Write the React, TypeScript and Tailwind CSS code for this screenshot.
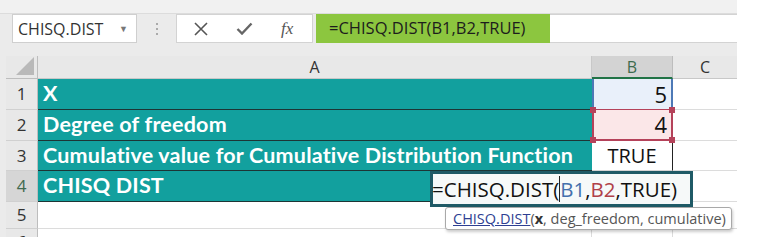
import React from "react";

const teal = "bg-[#12a09e]";

function TealCell({ children, bottomDark = true }: { children?: React.ReactNode; bottomDark?: boolean }) {
  return (
    <div
      className={`${teal} text-white font-bold text-[21.5px] tracking-[0.2px] leading-none pl-[5px] flex items-center whitespace-nowrap border-b ${bottomDark ? "border-[#1d3535]" : "border-[#d4d4d4]"}`}
      style={{ fontFamily: "Lato, 'Open Sans', sans-serif" }}
    >
      {children}
    </div>
  );
}

function RowHead({ n, active = false }: { n: string; active?: boolean }) {
  return (
    <div
      className={`flex items-center justify-center text-[17px] border-b border-[#d0d0d0] border-r border-r-[#bdbdbd] ${active ? "bg-[#d6d6d6] text-[#3f6a4f]" : "bg-[#e8e8e8] text-[#333]"}`}
    >
      {n}
    </div>
  );
}

export default function App() {
  const font = { fontFamily: "'Open Sans', 'Noto Sans', sans-serif" };
  return (
    <div className="w-[764px] h-[246px] bg-white overflow-hidden relative" style={font}>
      <div className="w-[737px] bg-[#ebebeb]">
        {/* toolbar */}
        <div className="h-[14px] bg-[#f1f1f1] border-b border-[#dcdcdc]" />
        <div className="flex h-[29px] items-stretch">
          <div className="ml-[12px] w-[125px] bg-white border border-[#cfcfcf] flex items-center pl-[5px] text-[16px] text-[#333]">
            <span>CHISQ.DIST</span>
            <span className="ml-auto mr-[8px] text-[9px] text-[#777]">▼</span>
          </div>
          <div className="w-[39px] flex flex-col items-center justify-center gap-[3px]">
            <div className="w-[2px] h-[2px] bg-[#aaa]" />
            <div className="w-[2px] h-[2px] bg-[#aaa]" />
            <div className="w-[2px] h-[2px] bg-[#aaa]" />
          </div>
          <div className="w-[137px] bg-white border border-[#d3d3d3] flex items-center">
            <svg width="14" height="14" viewBox="0 0 14 14" className="ml-[17px]">
              <path d="M1 1 L13 13 M13 1 L1 13" stroke="#555" strokeWidth="1.6" fill="none" />
            </svg>
            <svg width="17" height="13" viewBox="0 0 17 13" className="ml-[28px]">
              <path d="M1.5 7 L6 11.5 L15.5 1.5" stroke="#666" strokeWidth="2.4" fill="none" />
            </svg>
            <span className="ml-[28px] italic text-[17px] text-[#555]" style={{ fontFamily: "'Liberation Serif', serif" }}>
              fx
            </span>
          </div>
          <div className="ml-[3px] w-[234px] bg-[#8cc63f] flex items-center pl-[13px] text-[16.5px] text-[#1d1d1d]">
            =CHISQ.DIST(B1,B2,TRUE)
          </div>
          <div className="flex-1 bg-white border-y border-[#d3d3d3]" />
        </div>
        <div className="h-[13px]" />
        {/* grid */}
        <div
          className="ml-[6px] grid bg-white"
          style={{ gridTemplateColumns: "32px 554px 81px 64px", gridTemplateRows: "23px 31px 31px 30px 31px 27px 8px" }}
        >
          {/* header row */}
          <div className="bg-[#e8e8e8] border-r border-b border-[#bdbdbd] relative overflow-hidden">
            <div
              className="absolute right-[3px] bottom-[3px] w-0 h-0"
              style={{ borderLeft: "18px solid transparent", borderBottom: "18px solid #b9b9b9" }}
            />
          </div>
          <div className="bg-[#e8e8e8] border-r border-b border-[#c8c8c8] flex items-center justify-center text-[16px] text-[#333]">
            A
          </div>
          <div className="bg-[#d3d3d3] border-r border-[#bdbdbd] border-b-2 border-b-[#217346] flex items-center justify-center text-[16px] text-[#3d6b4e]">
            B
          </div>
          <div className="bg-[#e8e8e8] border-b border-[#c8c8c8] flex items-center justify-center text-[16px] text-[#333]">
            C
          </div>

          {/* row 1 */}
          <RowHead n="1" />
          <TealCell>X</TealCell>
          <div className="bg-[#e9f0fa] border-x-2 border-[#4d79b6] border-b border-b-[#b5425a] flex items-center justify-end pr-[4px] text-[22px] text-[#111] relative">
            5
          </div>
          <div className="border-b border-[#dcdcdc]" />

          {/* row 2 */}
          <RowHead n="2" />
          <TealCell>Degree of freedom</TealCell>
          <div className="bg-[#fbe7e8] border-x-2 border-[#b5425a] border-b-2 border-b-[#b5425a] flex items-center justify-end pr-[4px] text-[22px] text-[#111] relative">
            4
            <div className="absolute -left-[4px] -top-[3px] w-[6px] h-[6px] bg-[#b5425a]" />
            <div className="absolute -right-[4px] -top-[3px] w-[6px] h-[6px] bg-[#b5425a]" />
            <div className="absolute -left-[4px] -bottom-[4px] w-[6px] h-[6px] bg-[#b5425a]" />
            <div className="absolute -right-[4px] -bottom-[4px] w-[6px] h-[6px] bg-[#b5425a]" />
          </div>
          <div className="border-b border-[#dcdcdc]" />

          {/* row 3 */}
          <RowHead n="3" />
          <TealCell>Cumulative value for Cumulative Distribution Function</TealCell>
          <div className="bg-white border-r border-[#222] border-b border-b-[#d4d4d4] flex items-center justify-center text-[20px] text-[#111]">
            TRUE
          </div>
          <div className="border-b border-[#dcdcdc]" />

          {/* row 4 */}
          <RowHead n="4" active />
          <TealCell>CHISQ DIST</TealCell>
          <div className="border-r border-[#c8c8c8] border-b border-[#dcdcdc]" />
          <div className="border-b border-[#dcdcdc]" />

          {/* row 5 */}
          <RowHead n="5" />
          <div className="border-r border-[#dcdcdc] border-b border-b-[#dcdcdc]" />
          <div className="border-r border-[#dcdcdc] border-b border-b-[#dcdcdc]" />
          <div className="border-b border-[#dcdcdc]" />

          {/* row 6 */}
          <div className="bg-[#e8e8e8] border-r border-[#bdbdbd] overflow-hidden flex justify-center">
            <span className="text-[17px] leading-none mt-[4px] text-[#333]">6</span>
          </div>
          <div className="border-r border-[#dcdcdc]" />
          <div className="border-r border-[#dcdcdc]" />
          <div />
        </div>
      </div>

      {/* editing cell overlay */}
      <div className="absolute left-[430px] top-[171px] w-[263px] h-[36px] border-[3px] border-[#1f5a66] bg-[#f6f9f9] flex items-center text-[20.5px] text-[#111] leading-none">
        <span className="ml-[-1px]">=CHISQ.DIST(</span>
        <span className="w-[1px] h-[26px] bg-[#222]" />
        <span className="text-[#4470ad]">B1</span>
        <span>,</span>
        <span className="text-[#b04048]">B2</span>
        <span>,TRUE)</span>
      </div>

      {/* tooltip */}
      <div className="absolute left-[445px] top-[207px] w-[287px] h-[23px] bg-white border border-[#a9a9a9] rounded-[3px] shadow-[1px_2px_3px_rgba(0,0,0,0.2)] flex items-center pl-[7px] text-[14.5px] text-[#555] whitespace-nowrap">
        <span className="underline text-[#2e3f92]">CHISQ.DIST</span>
        <span>(</span>
        <span className="font-bold text-[#333]">x</span>
        <span>, deg_freedom, cumulative)</span>
      </div>
    </div>
  );
}
